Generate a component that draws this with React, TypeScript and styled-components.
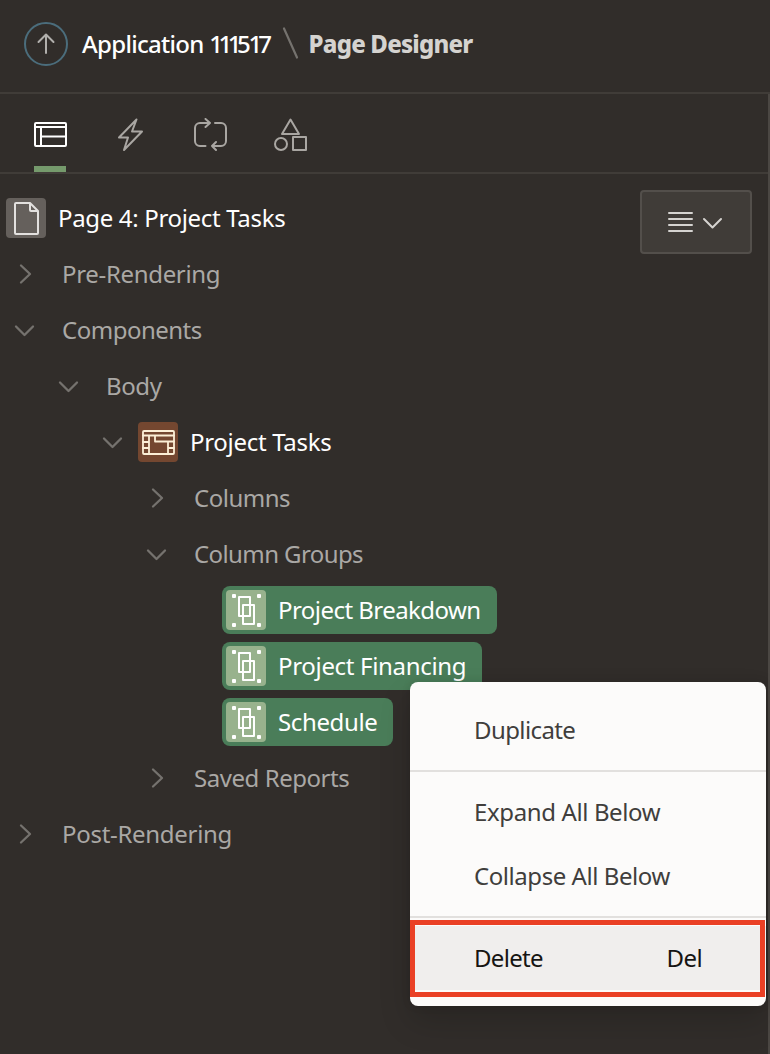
import React from 'react';
import styled, { createGlobalStyle, css } from 'styled-components';

const Global = createGlobalStyle`
  * { box-sizing: border-box; }
  body { margin: 0; background: #312d2a; font-family: 'Noto Sans', 'Open Sans', sans-serif; font-size: 24px; }
`;

const Page = styled.div`
  position: relative;
  display: flex;
  flex-direction: column;
  height: 1054px;
  width: 770px;
  overflow: hidden;
  color: #fff;
  background: #312d2a;
`;

const Header = styled.header`
  display: flex;
  align-items: center;
  height: 94px;
  padding: 0 24px 5px;
  border-bottom: 2px solid #403c38;
`;

const UpButton = styled.span`
  display: flex;
  width: 44px;
  height: 44px;
  margin-right: 14px;
  align-items: center;
  justify-content: center;
  border: 2px solid #4b6d7c;
  border-radius: 50%;
  color: #b1afac;
`;

const Text = styled.span<{ $track?: number }>`
  white-space: pre;
  line-height: 32px;
  letter-spacing: ${p => p.$track ?? -0.4}px;
`;

const Crumb = styled(Text)`
  font-weight: 500;
`;

const Digits = styled.span<{ $track: number }>`
  letter-spacing: ${p => p.$track}px;
`;

const CurrentCrumb = styled(Text)`
  color: #d5d3d0;
  font-weight: 800;
`;

const Slash = styled.svg`
  width: 18px;
  height: 34px;
  margin: 0 9px 0 10px;
`;

const Panel = styled.main`
  flex: 1;
  border-right: 2px solid #4b4743;
`;

const Tabs = styled.nav`
  display: flex;
  gap: 48px;
  height: 80px;
  padding: 0 34px;
  border-bottom: 2px solid #403c38;
`;

const Tab = styled.div<{ $active?: boolean }>`
  display: flex;
  width: 32px;
  justify-content: center;
  padding-top: 24px;
  color: ${p => (p.$active ? '#fff' : '#a9a6a2')};
  ${p => p.$active && css`border-bottom: 6px solid #759a6c;`}
`;

const TabIcon = styled.svg`
  flex: none;
  width: 34px;
  height: 34px;
`;

const Body = styled.div`
  display: flex;
  align-items: flex-start;
  justify-content: space-between;
  padding: 16px 16px 0 0;
`;

const Tree = styled.div`
  display: flex;
  flex-direction: column;
`;

const Row = styled.div<{ $level: number; $strong?: boolean }>`
  display: flex;
  align-items: center;
  height: 56px;
  padding-left: ${p => p.$level * 44 + 6}px;
  color: ${p => (p.$strong ? '#fff' : '#aaa8a5')};
`;

const Toggle = styled.span`
  display: flex;
  width: 38px;
  margin-right: 18px;
  color: #75726e;
`;

const Tile = styled.span<{ $color: string; $before?: boolean }>`
  display: flex;
  width: 40px;
  height: 40px;
  margin-right: 12px;
  margin-left: ${p => (p.$before ? '-12px' : '0')};
  border-radius: 4px;
  background: ${p => p.$color};
`;

const Chip = styled.div`
  display: flex;
  align-items: center;
  height: 48px;
  margin-left: 40px;
  padding: 0 16px 0 4px;
  border-radius: 8px;
  background: #4a7d59;
  color: #fff;
`;

const MenuButton = styled.button`
  display: flex;
  width: 112px;
  height: 64px;
  padding: 0;
  border: 2px solid #534f4b;
  border-radius: 4px;
  background: #403c38;
  color: #d5d3d0;
`;

const Menu = styled.div`
  position: absolute;
  left: 410px;
  top: 682px;
  width: 356px;
  height: 324px;
  padding: 16px 0;
  border-radius: 8px;
  background: #fcfbfa;
  color: #403e3c;
  box-shadow: 0 16px 32px rgba(0, 0, 0, 0.16), 0 0 8px rgba(0, 0, 0, 0.12);
`;

const MenuItem = styled.div<{ $active?: boolean }>`
  display: flex;
  align-items: center;
  justify-content: space-between;
  height: 64px;
  padding: 0 64px;
  ${p => p.$active && css`background: #f0eeed; color: #161513;`}
`;

const Separator = styled.div`
  height: 2px;
  margin: 8px 0;
  background: #e2e0de;
`;

const Highlight = styled.div`
  position: absolute;
  left: 0;
  top: 238px;
  width: 355px;
  height: 77px;
  border: 5px solid #ea4025;
`;

const line = { fill: 'none', stroke: 'currentColor', strokeLinecap: 'round', strokeLinejoin: 'round' } as const;

const Chevron = ({ open }: { open?: boolean }) => (
  <Toggle>
    <svg width="38" height="24" viewBox="0 0 38 24" {...line} strokeWidth="2.3">
      <path d={open ? 'M10 8.5l8.5 8.5L27 8.5' : 'M15 3.5l9 8.5-9 8.5'} />
    </svg>
  </Toggle>
);

const PageIcon = () => (
  <svg width="40" height="40" {...line} stroke="#e3e1df" strokeWidth="2">
    <path d="M10 5h14l8 8v22q0 1-1 1H10q-1 0-1-1V6q0-1 1-1zM24 5v7q0 1 1 1h7" />
  </svg>
);

const GridIcon = () => (
  <svg width="40" height="40" {...line} stroke="#fcefd6" strokeWidth="1.8">
    <rect x="5" y="9" width="31" height="23" rx="1" />
    <path d="M5 13.500h31M11 14v18M5 20h6M5 26h6M17 14v5.500h19M30 20v12M30 26h6" />
  </svg>
);

const GroupIcon = () => (
  <svg width="40" height="40" fill="none" stroke="#fff" strokeWidth="2">
    <path d="M13 7h11v19h-11zM17 15h11v19h-11z" strokeLinejoin="round" />
    <g fill="#fff" stroke="none">
      <rect x="6" y="4" width="4" height="4" rx="1" />
      <rect x="31" y="4" width="4" height="4" rx="1" />
      <rect x="6" y="33" width="4" height="4" rx="1" />
      <rect x="31" y="33" width="4" height="4" rx="1" />
    </g>
  </svg>
);

const Node = ({ level, open, track, children }: { level: number; open?: boolean; track?: number; children: string }) => (
  <Row $level={level}>
    <Chevron open={open} />
    <Text $track={track}>{children}</Text>
  </Row>
);

const Selected = ({ track, children }: { track?: number; children: string }) => (
  <Row $level={4}>
    <Chip>
      <Tile $color="#98b28d"><GroupIcon /></Tile>
      <Text $track={track}>{children}</Text>
    </Chip>
  </Row>
);

export default function App() {
  return (
    <Page>
      <Global />
      <Header>
        <UpButton>
          <svg width="20" height="24" {...line} strokeWidth="2">
            <path d="M10 21V3M2.500 10L10 2.500 17.500 10" />
          </svg>
        </UpButton>
        <Crumb $track={-0.7}>
          {'Application '}
          <Digits $track={-4.5}>111</Digits>
          <Digits $track={-2.2}>5</Digits>
          <Digits $track={-3.8}>1</Digits>
          <Digits $track={-0.5}>7</Digits>
        </Crumb>
        <Slash viewBox="0 0 18 34" {...line} stroke="#75726e" strokeWidth="2.2">
          <path d="M2 1.500l13 29" />
        </Slash>
        <CurrentCrumb $track={-0.8}>Page Designer</CurrentCrumb>
      </Header>
      <Panel>
        <Tabs>
          <Tab $active>
            <TabIcon {...line} strokeWidth="2">
              <rect x="2" y="5" width="31" height="23" rx="1" />
              <path d="M2 9h31M8 9v19M8 18.500h25" />
            </TabIcon>
          </Tab>
          <Tab>
            <TabIcon {...line} strokeWidth="2">
              <path d="M23.500 1.500L6 19.500h9L11 32 29 13.500h-10z" />
            </TabIcon>
          </Tab>
          <Tab>
            <TabIcon {...line} strokeWidth="2">
              <path d="M12.500 28H7a5 5 0 01-5-5V10a5 5 0 015-5h10M12.500 1l4.500 4-4.500 4M22 5h6a5 5 0 015 5v13a5 5 0 01-5 5H19M23 24l-4 4 4 4" />
            </TabIcon>
          </Tab>
          <Tab>
            <TabIcon {...line} strokeWidth="2">
              <path d="M17.500 1.500L26 16H9z" />
              <circle cx="8" cy="26" r="6" />
              <rect x="20" y="19" width="13" height="13" />
            </TabIcon>
          </Tab>
        </Tabs>
        <Body>
          <Tree>
            <Row $level={0} $strong>
              <Tile $color="#65605c"><PageIcon /></Tile>
              <Text $track={-0.33}>Page 4: Project Tasks</Text>
            </Row>
            <Node level={0} track={-0.33}>Pre-Rendering</Node>
            <Node level={0} open track={-0.5}>Components</Node>
            <Node level={1} open track={-0.4}>Body</Node>
            <Row $level={2} $strong>
              <Chevron open />
              <Tile $color="#744730" $before><GridIcon /></Tile>
              <Text $track={-0.3}>Project Tasks</Text>
            </Row>
            <Node level={3} track={-0.5}>Columns</Node>
            <Node level={3} open track={-0.6}>Column Groups</Node>
            <Selected track={-0.55}>Project Breakdown</Selected>
            <Selected track={-0.32}>Project Financing</Selected>
            <Selected track={-0.38}>Schedule</Selected>
            <Node level={3} track={-0.45}>Saved Reports</Node>
            <Node level={0} track={-0.3}>Post-Rendering</Node>
          </Tree>
          <MenuButton>
            <svg width="108" height="60" {...line} strokeWidth="2">
              <path d="M27 21h23M27 27h23M27 33h23M27 39h23M62 27l8.500 8.500L79 27" />
            </svg>
          </MenuButton>
        </Body>
      </Panel>
      <Menu>
        <MenuItem><Text $track={-0.6}>Duplicate</Text></MenuItem>
        <Separator />
        <MenuItem><Text $track={-0.38}>Expand All Below</Text></MenuItem>
        <MenuItem><Text $track={-0.44}>Collapse All Below</Text></MenuItem>
        <Separator />
        <MenuItem $active><Text $track={-0.7}>Delete</Text><Text $track={-0.6}>Del</Text></MenuItem>
        <Highlight />
      </Menu>
    </Page>
  );
}
